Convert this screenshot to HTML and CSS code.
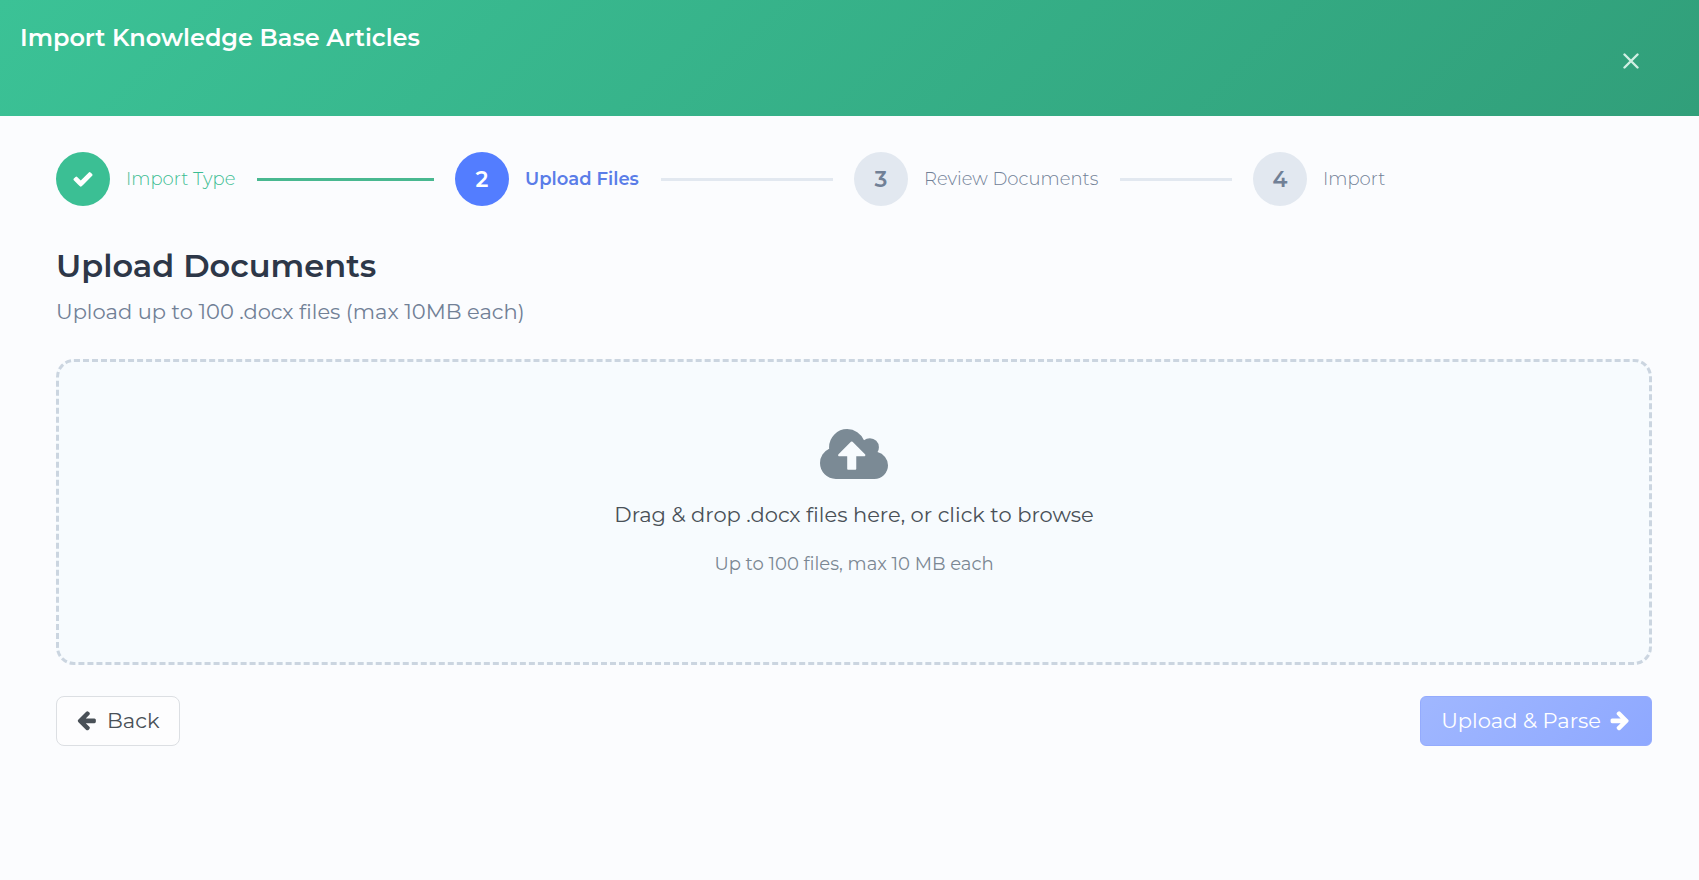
FILE: index.html
```html
<!DOCTYPE html>
<html lang="en">
<head>
<meta charset="utf-8">
<title>Import Knowledge Base Articles</title>
<link rel="stylesheet" href="styles.css">
</head>
<body>
<header class="header">
  <h1 class="header-title">Import Knowledge Base Articles</h1>
  <button class="close" type="button" aria-label="Close">
    <svg viewBox="0 0 16 16" width="16" height="16" aria-hidden="true"><path d="M1.500 1.500L14.500 14.500M14.500 1.500L1.500 14.500"/></svg>
  </button>
</header>
<main class="content">
  <ol class="steps">
    <li class="step step-done">
      <span class="step-circle"><svg class="icon" viewBox="0 0 1792 1792" aria-hidden="true"><path d="M1671 566q0 40-28 68l-724 724-136 136q-28 28-68 28t-68-28l-136-136-362-362q-28-28-28-68t28-68l136-136q28-28 68-28t68 28l294 295 656-657q28-28 68-28t68 28l136 136q28 28 28 68z"/></svg></span>
      <span class="step-label">Import Type</span>
      <span class="step-line"></span>
    </li>
    <li class="step step-active" aria-current="step">
      <span class="step-circle">2</span>
      <span class="step-label">Upload Files</span>
      <span class="step-line"></span>
    </li>
    <li class="step">
      <span class="step-circle">3</span>
      <span class="step-label">Review Documents</span>
      <span class="step-line"></span>
    </li>
    <li class="step">
      <span class="step-circle">4</span>
      <span class="step-label">Import</span>
    </li>
  </ol>
  <h2 class="title">Upload Documents</h2>
  <p class="subtitle">Upload up to 100 .docx files (max 10MB each)</p>
  <button class="dropzone" type="button">
    <svg class="cloud" viewBox="-64 128 1920 1408" aria-hidden="true"><path d="M1216 864q0-14-9-23l-352-352q-9-9-23-9t-23 9l-351 351q-10 12-10 24 0 14 9 23t23 9h224v352q0 13 9.500 22.500t22.500 9.500h192q13 0 22.500-9.500t9.500-22.500v-352h224q13 0 22.500-9.500t9.500-22.500zm640 288q0 159-112.500 271.500t-271.500 112.500h-1088q-185 0-316.500-131.500t-131.500-316.500q0-130 70-240t188-165q-2-30-2-43 0-212 150-362t362-150q156 0 285.500 87t188.500 231q71-62 166-62 106 0 181 75t75 181q0 76-41 138 130 31 213.500 135.500t83.500 238.500z"/></svg>
    <span class="drop-text">Drag &amp; drop .docx files here, or click to browse</span>
    <span class="drop-hint">Up to 100 files, max 10 MB each</span>
  </button>
  <div class="actions">
    <button class="btn btn-back" type="button">
      <svg class="icon" viewBox="128 0 1792 1792" aria-hidden="true"><path d="M1664 896v128q0 53-32.500 90.500t-84.500 37.500h-704l293 294q38 36 38 90t-38 90l-75 76q-37 37-90 37-52 0-91-37l-651-652q-37-37-37-90 0-52 37-91l651-650q38-38 91-38 52 0 90 38l75 74q38 38 38 91t-38 91l-293 293h704q52 0 84.500 37.500t32.500 90.500z"/></svg>
      <span>Back</span>
    </button>
    <button class="btn btn-next" type="button" disabled>
      <span>Upload &amp; Parse</span>
      <svg class="icon" viewBox="0 0 1792 1792" aria-hidden="true"><path d="M1600 960q0 54-37 91l-651 651q-39 37-91 37-51 0-90-37l-75-75q-38-38-38-91t38-91l293-293h-704q-52 0-84.500-37.500t-32.500-90.500v-128q0-53 32.500-90.500t84.500-37.500h704l-293-294q-38-36-38-90t38-90l75-75q38-38 90-38 53 0 91 38l651 651q37 35 37 90z"/></svg>
    </button>
  </div>
</main>
</body>
</html>
```
FILE: styles.css
```css
* {
  box-sizing: border-box;
}

body {
  margin: 0;
  background: #fbfcfe;
  color: #2d3748;
  font-family: Montserrat, Inter, "Open Sans", sans-serif;
  font-size: 21px;
}

.header {
  display: flex;
  justify-content: space-between;
  align-items: flex-start;
  padding: 20px 47px 34px 20px;
  background: linear-gradient(135deg, #3bc296 0%, #319f7a 100%);
}

.header-title {
  margin: 0;
  color: #fff;
  font-size: 24px;
  font-weight: 600;
  line-height: 36px;
}

.close {
  display: flex;
  align-items: center;
  justify-content: center;
  width: 42px;
  height: 42px;
  margin-top: 20px;
  padding: 0;
  border: 0;
  background: none;
}

.close path {
  stroke: #d0efe3;
  stroke-width: 2.4;
  stroke-linecap: round;
}

.content {
  padding: 36px 47px 36px 56px;
}

.steps {
  display: grid;
  grid-template-columns: repeat(4, 1fr);
  margin: 0 0 36px;
  padding: 0;
  list-style: none;
}

.step {
  display: flex;
  align-items: center;
  color: #718096;
}

.step-circle {
  display: flex;
  flex: none;
  align-items: center;
  justify-content: center;
  width: 54px;
  height: 54px;
  margin-right: 16px;
  border-radius: 50%;
  background: #e2e8f0;
  font-size: 22px;
  font-weight: 600;
}

.step-label {
  font-size: 18px;
  font-weight: 300;
  white-space: nowrap;
}

.step-line {
  flex: 1;
  height: 3px;
  margin: 0 21px 0 22px;
  background: #e2e8f0;
}

.step-done {
  color: #3bbd92;
}

.step-done .step-circle {
  background: #3bbf94;
  color: #fff;
}

.step-done .step-line {
  background: #48b890;
}

.step-active {
  color: #5a7de8;
}

.step-active .step-circle {
  background: #537dff;
  color: #fff;
}

.step-active .step-label {
  font-weight: 600;
}

.icon {
  width: 22px;
  height: 22px;
  fill: currentColor;
}

.title {
  margin: 0 0 7px;
  font-size: 32px;
  font-weight: 600;
  line-height: 48px;
}

.subtitle {
  margin: 0 0 33px;
  color: #718096;
  font-weight: 400;
  line-height: 29px;
}

.dropzone {
  display: flex;
  flex-direction: column;
  align-items: center;
  width: 100%;
  padding: 67px 24px 84px;
  border: 3px dashed #cbd5e0;
  border-radius: 18px;
  background: #f7fbfe;
  font-family: inherit;
  font-weight: 400;
}

.cloud {
  width: 68px;
  height: 50px;
  margin-bottom: 20px;
  fill: #7b8a95;
}

.drop-text {
  margin-bottom: 20px;
  color: #495057;
  font-size: 21px;
  line-height: 32px;
}

.drop-hint {
  color: #7b8793;
  font-size: 18px;
  line-height: 27px;
}

.actions {
  display: flex;
  justify-content: space-between;
  margin-top: 31px;
}

.btn {
  display: flex;
  align-items: center;
  gap: 8px;
  height: 50px;
  padding: 0 20px 2px;
  border: 1px solid #dcdfe3;
  border-radius: 8px;
  font-family: inherit;
  font-size: 21px;
  font-weight: 400;
}

.btn-back {
  background: #fdfdfe;
  color: #495057;
}

.btn-next {
  border-color: #94abfd;
  border-radius: 6px;
  background: linear-gradient(135deg, #a0b7ff, #8ea8ff);
  color: #fff;
}
```
